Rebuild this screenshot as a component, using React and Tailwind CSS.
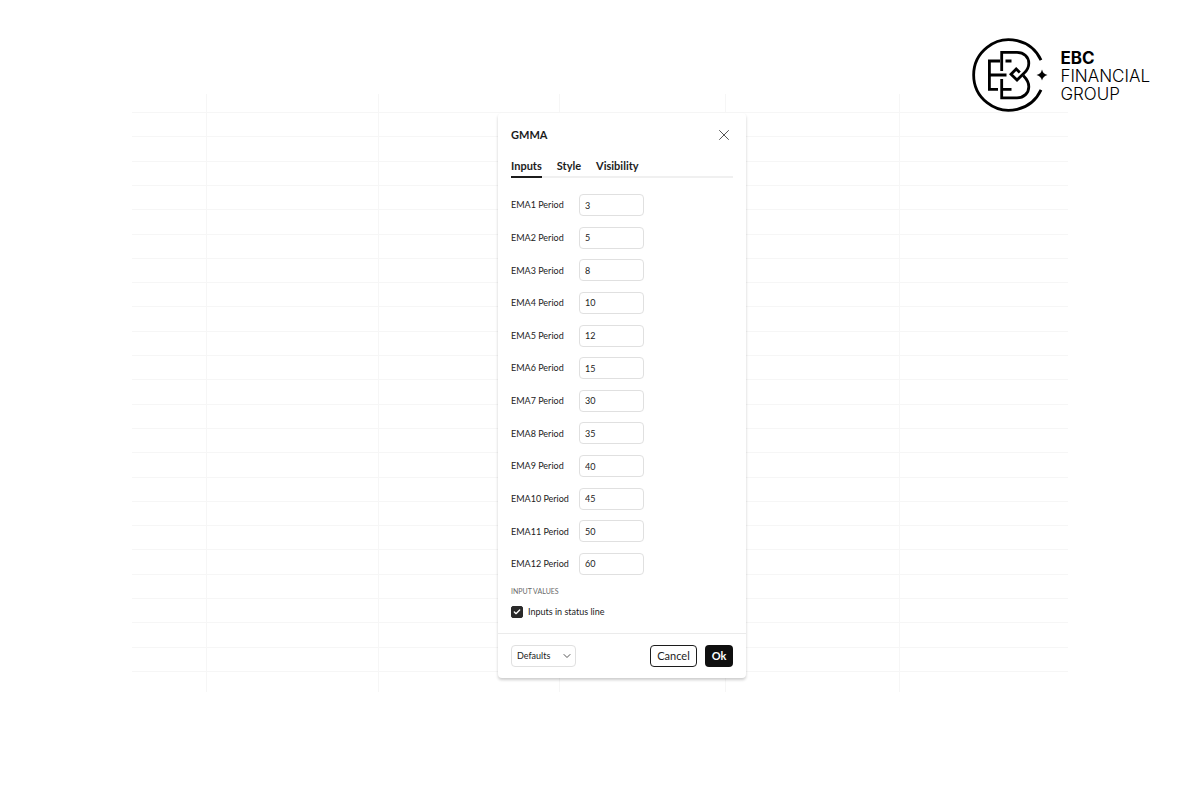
import { useState } from 'react'
import { Check, ChevronDown, X } from 'lucide-react'

const PERIODS = [3, 5, 8, 10, 12, 15, 30, 35, 40, 45, 50, 60]
const TABS = ['Inputs', 'Style', 'Visibility']

const GRID_ROWS = Array.from({ length: 24 }, (_, i) => Math.round(18 + i * 24.3))
const GRID_COLS = ['8%', '26.3%', '45.7%', '63.4%', '82%']

function ChartGrid() {
  return (
    <svg className="col-start-1 row-start-1 w-full h-full" stroke="#f6f6f6" shapeRendering="crispEdges" aria-hidden="true">
      {GRID_ROWS.map((y) => (
        <line key={y} x1="0" x2="100%" y1={y + 0.5} y2={y + 0.5} />
      ))}
      {GRID_COLS.map((x) => (
        <line key={x} x1={x} x2={x} y1="0" y2="100%" />
      ))}
    </svg>
  )
}

function Logo() {
  return (
    <div className="absolute top-[38px] right-[50px] flex items-center gap-3 text-black">
      <svg className="w-[76px] h-[74px]" viewBox="0 0 76 74" fill="none" stroke="currentColor" aria-hidden="true">
        {/* Open ring */}
        <path d="M69 22.2A35.3 35.3 0 1 0 69 51.8" strokeWidth="2.8" />
        {/* E */}
        <path d="M28 23H17.4V51.4H26M17.4 37H34.5M33.5 23H39.5M30 51.4H39.5" strokeWidth="2.8" />
        {/* B with the hook in the middle */}
        <path d="M29.7 33V14.4H45C52 14.4 56.8 19 56.8 25.3C56.8 29.2 55 32.5 52.2 35L45 42L39 36.3L44.2 31L47.8 34.5" strokeWidth="2.8" />
        <path d="M29.7 41V59.8H45C52 59.8 56.8 55 56.8 48.8C56.8 44.5 55 41.4 51.2 37.6" strokeWidth="2.8" />
        {/* Star */}
        <path d="M70 31.5Q71 36 75.5 37Q71 38 70 42.5Q69 38 64.5 37Q69 36 70 31.5Z" fill="currentColor" stroke="none" />
      </svg>
      <div className="pt-px font-['Inter',sans-serif] text-[17px] leading-[18px] font-light">
        <div className="font-bold">EBC</div>
        <div>FINANCIAL</div>
        <div>GROUP</div>
      </div>
    </div>
  )
}

function PeriodRow({ index, value }) {
  const id = `ema-${index}`
  return (
    <div className="flex items-center h-[22px]">
      <label htmlFor={id} className="w-[68px] shrink-0">EMA{index} Period</label>
      <input
        id={id}
        type="text"
        defaultValue={value}
        className="w-[65px] h-[22px] rounded-[4px] border border-[#e0e0e0] bg-white px-[5px] outline-none"
      />
    </div>
  )
}

function SettingsDialog() {
  const [tab, setTab] = useState('Inputs')
  const [checked, setChecked] = useState(true)

  return (
    <div
      role="dialog"
      aria-labelledby="dialog-title"
      className="col-start-1 row-start-1 justify-self-center self-start mt-[19px] ml-11 w-[248px] rounded bg-white text-[9px] text-[#1c1c1c] shadow-[0_2px_3px_rgba(0,0,0,0.2)]"
    >
      <div className="px-[13px] pt-3">
        <div className="flex items-center justify-between h-5">
          <h2 id="dialog-title" className="text-[11px] font-bold">GMMA</h2>
          <button type="button" aria-label="Close" className="w-[18px] h-5 flex items-center justify-center">
            <X size={18} strokeWidth={1} />
          </button>
        </div>

        <div role="tablist" className="mt-3 h-[21px] flex gap-[15px] border-b-2 border-[#f0f0f0] text-[11px] leading-4 font-bold">
          {TABS.map((name) => (
            <button
              key={name}
              type="button"
              role="tab"
              aria-selected={tab === name}
              onClick={() => setTab(name)}
              className={`h-[21px] pb-[2px] border-b-2 ${tab === name ? 'border-[#1c1c1c]' : 'border-transparent'}`}
            >
              {name}
            </button>
          ))}
        </div>

        <div className="mt-4 h-[381px] flex flex-col justify-between">
          {PERIODS.map((value, i) => (
            <PeriodRow key={i} index={i + 1} value={value} />
          ))}
        </div>

        <h3 className="mt-2 text-[7px] leading-4 text-[#6a6a6a]">INPUT VALUES</h3>
        <label className="mt-[5px] mb-[13px] flex items-center gap-[5px] h-4">
          <span className="relative w-3 h-3">
            <input
              type="checkbox"
              checked={checked}
              onChange={(e) => setChecked(e.target.checked)}
              className="block appearance-none w-3 h-3 rounded-[2px] border border-[#2a2a2a] checked:bg-[#2a2a2a]"
            />
            {checked && <Check size={8} strokeWidth={4} className="absolute top-[2px] left-[2px] text-white pointer-events-none" />}
          </span>
          Inputs in status line
        </label>
      </div>

      <div className="flex items-center gap-2 border-t border-[#ebebeb] px-[13px] py-[11px]">
        <div className="relative mr-auto">
          <select
            aria-label="Defaults"
            className="block appearance-none w-[65px] h-[22px] rounded-[4px] border border-[#e0e0e0] bg-white pl-[5px] outline-none"
          >
            <option>Defaults</option>
          </select>
          <ChevronDown size={12} strokeWidth={2} className="absolute top-[5px] right-[3px] text-[#555] pointer-events-none" />
        </div>
        <button type="button" className="w-[47px] h-[22px] rounded-[4px] border border-[#1c1c1c] text-[11px]">Cancel</button>
        <button type="button" className="w-7 h-[22px] rounded-[4px] bg-[#0f0f0f] text-[11px] font-bold text-white">Ok</button>
      </div>
    </div>
  )
}

export default function App() {
  return (
    <main className="relative min-h-screen bg-white px-[11%] pt-[94px] pb-24 font-['Trebuchet_MS','Lato',sans-serif]">
      <div className="grid min-h-[598px]">
        <ChartGrid />
        <SettingsDialog />
      </div>
      <Logo />
    </main>
  )
}
